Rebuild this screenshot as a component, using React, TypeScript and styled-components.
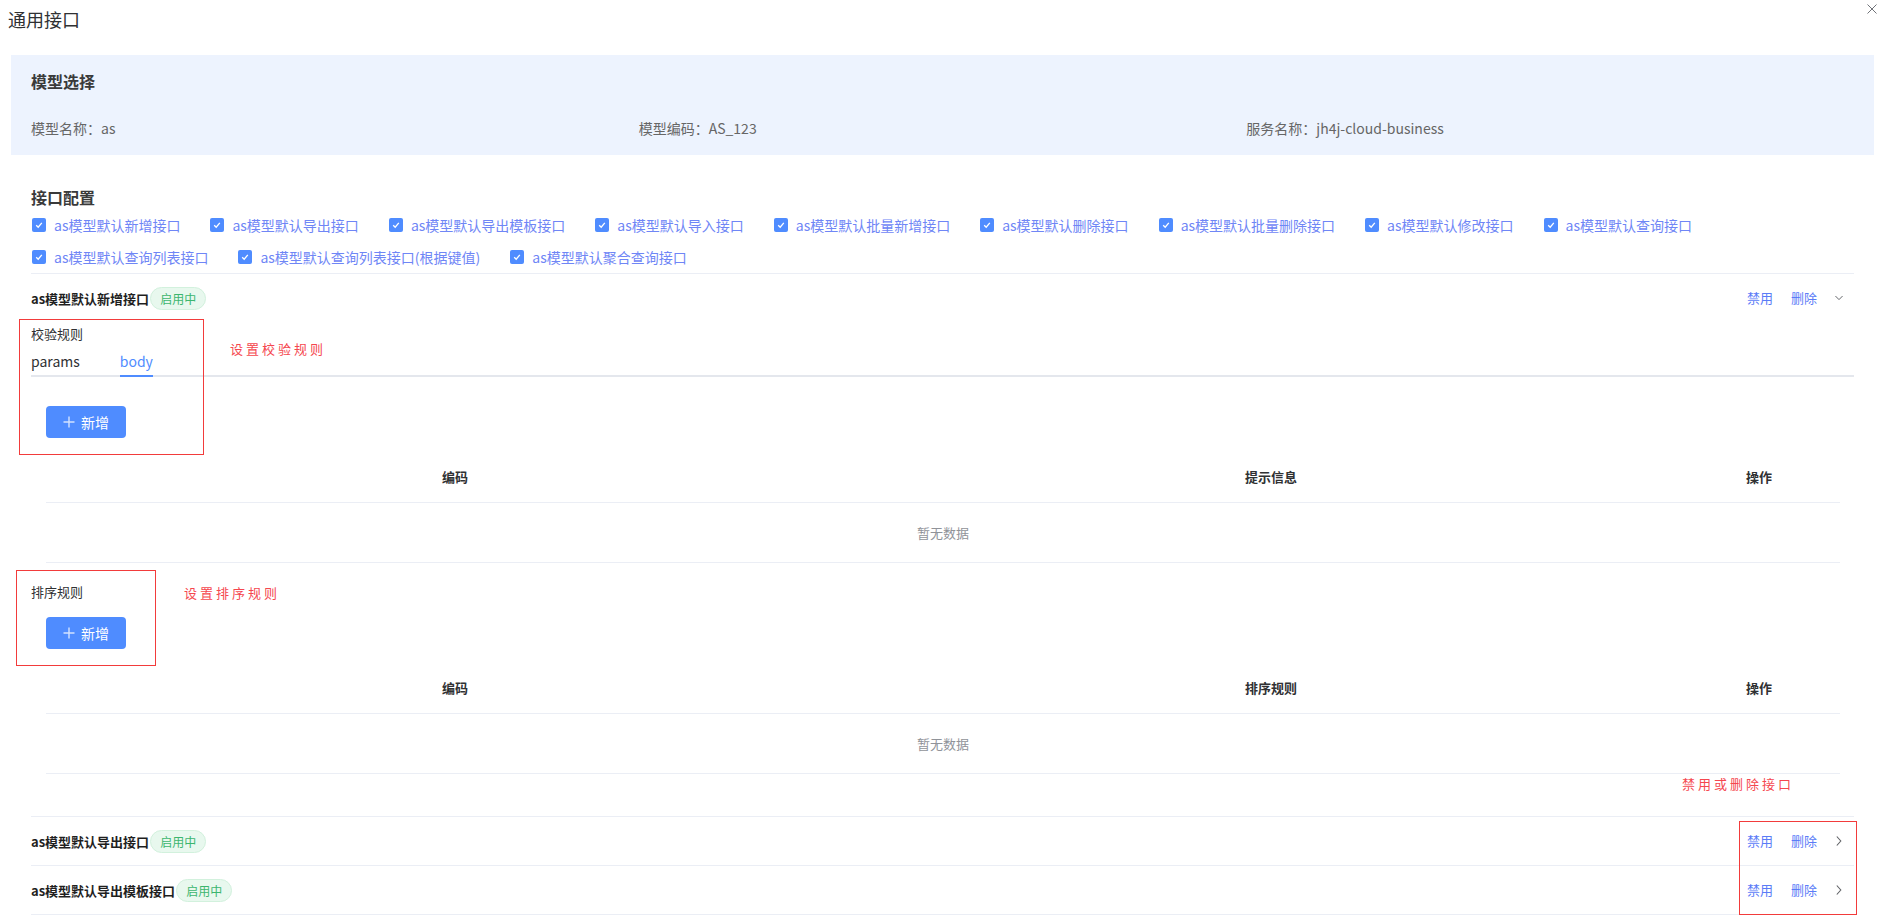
import styled, { createGlobalStyle } from 'styled-components'

const GlobalStyle = createGlobalStyle`
  html, body {
    margin: 0;
    padding: 0;
    background: #fff;
  }
  body {
    font-family: "Noto Sans CJK SC", "Noto Sans", sans-serif;
    color: #303133;
  }
  * {
    box-sizing: border-box;
  }
`

const Dialog = styled.div`
  width: 1881px;
  min-height: 921px;
  background: #fff;
`

const Header = styled.div`
  height: 55px;
  display: flex;
  justify-content: space-between;
  align-items: flex-start;
  padding: 0 4px 0 8px;
`

const Title = styled.div`
  padding-top: 7px;
  font-size: 18px;
  line-height: 24px;
  color: #303133;
`

const CloseButton = styled.button`
  margin-top: 4px;
  width: 10px;
  height: 10px;
  padding: 0;
  border: none;
  background: none;
  cursor: pointer;
  display: flex;
`

const Body = styled.div`
  padding: 0 7px 0 11px;
`

const ModelPanel = styled.div`
  background: #edf3fe;
  padding: 14px 20px 16px;
`

const PanelTitle = styled.div`
  font-size: 16px;
  line-height: 24px;
  font-weight: 600;
  color: #3a3a3a;
`

const InfoGrid = styled.div`
  margin-top: 24px;
  display: grid;
  grid-template-columns: repeat(3, 1fr);
`

const InfoItem = styled.div`
  font-size: 14px;
  line-height: 22px;
  color: #666;
`

const ConfigSection = styled.div`
  margin-top: 30px;
  padding: 0 20px;
`

const SectionTitle = styled.div`
  font-size: 16px;
  line-height: 24px;
  font-weight: 600;
  color: #3a3a3a;
`

const CheckGroup = styled.div`
  display: flex;
  flex-wrap: wrap;
  column-gap: 29px;
`

const CheckItem = styled.label`
  height: 32px;
  display: flex;
  align-items: center;
  cursor: pointer;
`

const CheckBox = styled.span`
  width: 14px;
  height: 14px;
  margin-left: 1px;
  border-radius: 2px;
  background: #4f8cff;
  display: flex;
  align-items: center;
  justify-content: center;
`

const CheckLabel = styled.span`
  padding-left: 8px;
  font-size: 14px;
  line-height: 20px;
  color: #6f86f6;
`

const InterfaceList = styled.div`
  position: relative;
  border-bottom: 1px solid #ebeef5;
`

const InterfaceItem = styled.div`
  border-top: 1px solid #ebeef5;
`

const ItemHeader = styled.div`
  height: 48px;
  display: flex;
  align-items: center;
  justify-content: space-between;
`

const ItemName = styled.div`
  display: flex;
  align-items: center;
  font-size: 13px;
  font-weight: 700;
  color: #1f1f1f;
`

const StatusTag = styled.span`
  margin-left: 1px;
  height: 23px;
  padding: 0 9px;
  border-radius: 12px;
  background: #e8f8ee;
  border: 1px solid #d2f1dd;
  color: #3cb66e;
  font-size: 12px;
  font-weight: 400;
  line-height: 21px;
`

const Actions = styled.div`
  display: flex;
  align-items: center;
  padding-right: 11px;
`

const ActionLink = styled.span`
  font-size: 13px;
  line-height: 20px;
  color: #5b7cf7;
  margin-right: 18px;
  cursor: pointer;
`

const Chevron = styled.span`
  width: 8px;
  height: 10px;
  display: flex;
  align-items: center;
  justify-content: center;
`

const Expanded = styled.div`
  padding-bottom: 42px;
`

const RuleLabel = styled.div<{ $gap?: number }>`
  margin-top: ${(p) => p.$gap ?? 0}px;
  font-size: 13px;
  line-height: 24px;
  color: #303133;
`

const Tabs = styled.div`
  height: 31px;
  display: flex;
  align-items: stretch;
  border-bottom: 2px solid #e4e7ed;
`

const TabItem = styled.div`
  padding: 0 20px;
  margin-bottom: -2px;
  display: flex;
  cursor: pointer;

  &:first-child {
    padding-left: 0;
  }
`

const TabText = styled.span<{ $active?: boolean }>`
  display: flex;
  align-items: center;
  font-size: 14px;
  color: ${(p) => (p.$active ? '#4f8cff' : '#303133')};
  border-bottom: 2px solid ${(p) => (p.$active ? '#4f8cff' : 'transparent')};
`

const RuleBody = styled.div`
  padding: 0 14px 0 15px;
`

const AddButton = styled.button<{ $gap: number }>`
  margin-top: ${(p) => p.$gap}px;
  width: 80px;
  height: 32px;
  border: none;
  border-radius: 4px;
  background: #4f8cff;
  color: #fff;
  font-family: inherit;
  font-size: 14px;
  display: flex;
  align-items: center;
  justify-content: center;
  gap: 6px;
  cursor: pointer;
`

const Table = styled.div`
  margin-top: 13px;
`

const TableRow = styled.div<{ $height: number }>`
  display: grid;
  grid-template-columns: 818px 814px 1fr;
  height: ${(p) => p.$height}px;
  align-items: center;
  border-bottom: 1px solid #ebeef5;
`

const HeaderCell = styled.div`
  text-align: center;
  font-size: 13px;
  font-weight: 700;
  color: #303133;
`

const EmptyCell = styled.div`
  grid-column: 1 / -1;
  text-align: center;
  font-size: 13px;
  color: #909399;
`

const NoteBox = styled.div<{ $l: number; $t: number; $w: number; $h: number }>`
  position: absolute;
  left: ${(p) => p.$l}px;
  top: ${(p) => p.$t}px;
  width: ${(p) => p.$w}px;
  height: ${(p) => p.$h}px;
  border: 1px solid #f23b3b;
  pointer-events: none;
`

const NoteText = styled.div<{ $l: number; $t: number }>`
  position: absolute;
  left: ${(p) => p.$l}px;
  top: ${(p) => p.$t}px;
  font-family: "Liberation Serif", "Noto Sans CJK SC", serif;
  font-size: 13px;
  line-height: 16px;
  letter-spacing: 3px;
  color: #f5474f;
  white-space: nowrap;
`

const interfaces = [
  'as模型默认新增接口',
  'as模型默认导出接口',
  'as模型默认导出模板接口',
  'as模型默认导入接口',
  'as模型默认批量新增接口',
  'as模型默认删除接口',
  'as模型默认批量删除接口',
  'as模型默认修改接口',
  'as模型默认查询接口',
  'as模型默认查询列表接口',
  'as模型默认查询列表接口(根据键值)',
  'as模型默认聚合查询接口',
]

function CheckMark() {
  return (
    <svg width="10" height="10" viewBox="0 0 10 10">
      <polyline points="2.2,5.2 4.2,7.2 7.8,2.8" fill="none" stroke="#fff" strokeWidth="1.3" />
    </svg>
  )
}

function ArrowIcon({ open }: { open?: boolean }) {
  return open ? (
    <svg width="9" height="6" viewBox="0 0 9 6">
      <polyline points="0.5,0.8 4.5,4.8 8.5,0.8" fill="none" stroke="#606266" strokeWidth="1.1" />
    </svg>
  ) : (
    <svg width="6" height="10" viewBox="0 0 6 10">
      <polyline points="0.8,0.5 4.8,5 0.8,9.5" fill="none" stroke="#606266" strokeWidth="1.1" />
    </svg>
  )
}

function PlusIcon() {
  return (
    <svg width="12" height="12" viewBox="0 0 12 12">
      <path d="M6 0.5v11M0.5 6h11" stroke="rgba(255,255,255,0.75)" strokeWidth="1.4" />
    </svg>
  )
}

function RuleTable({ middle }: { middle: string }) {
  return (
    <Table>
      <TableRow $height={52}>
        <HeaderCell>编码</HeaderCell>
        <HeaderCell>{middle}</HeaderCell>
        <HeaderCell>操作</HeaderCell>
      </TableRow>
      <TableRow $height={60}>
        <EmptyCell>暂无数据</EmptyCell>
      </TableRow>
    </Table>
  )
}

function ItemBar({ name, open }: { name: string; open?: boolean }) {
  return (
    <ItemHeader>
      <ItemName>
        {name}
        <StatusTag>启用中</StatusTag>
      </ItemName>
      <Actions>
        <ActionLink>禁用</ActionLink>
        <ActionLink>删除</ActionLink>
        <Chevron>
          <ArrowIcon open={open} />
        </Chevron>
      </Actions>
    </ItemHeader>
  )
}

export default function App() {
  return (
    <Dialog>
      <GlobalStyle />
      <Header>
        <Title>通用接口</Title>
        <CloseButton aria-label="close">
          <svg width="10" height="10" viewBox="0 0 10 10">
            <path d="M0.5 0.5l9 9M9.5 0.5l-9 9" stroke="#707379" strokeWidth="1" />
          </svg>
        </CloseButton>
      </Header>
      <Body>
        <ModelPanel>
          <PanelTitle>模型选择</PanelTitle>
          <InfoGrid>
            <InfoItem>模型名称：as</InfoItem>
            <InfoItem>模型编码：AS_123</InfoItem>
            <InfoItem>服务名称：jh4j-cloud-business</InfoItem>
          </InfoGrid>
        </ModelPanel>

        <ConfigSection>
          <SectionTitle>接口配置</SectionTitle>
          <CheckGroup>
            {interfaces.map((name) => (
              <CheckItem key={name}>
                <CheckBox>
                  <CheckMark />
                </CheckBox>
                <CheckLabel>{name}</CheckLabel>
              </CheckItem>
            ))}
          </CheckGroup>

          <InterfaceList>
            <InterfaceItem>
              <ItemBar name="as模型默认新增接口" open />
              <Expanded>
                <RuleLabel>校验规则</RuleLabel>
                <Tabs>
                  <TabItem>
                    <TabText>params</TabText>
                  </TabItem>
                  <TabItem>
                    <TabText $active>body</TabText>
                  </TabItem>
                </Tabs>
                <RuleBody>
                  <AddButton $gap={29}>
                    <PlusIcon />
                    新增
                  </AddButton>
                  <RuleTable middle="提示信息" />
                </RuleBody>
                <RuleLabel $gap={17}>排序规则</RuleLabel>
                <RuleBody>
                  <AddButton $gap={13}>
                    <PlusIcon />
                    新增
                  </AddButton>
                  <RuleTable middle="排序规则" />
                </RuleBody>
              </Expanded>
            </InterfaceItem>
            <InterfaceItem>
              <ItemBar name="as模型默认导出接口" />
            </InterfaceItem>
            <InterfaceItem>
              <ItemBar name="as模型默认导出模板接口" />
            </InterfaceItem>

            <NoteBox $l={-12} $t={46} $w={185} $h={136} />
            <NoteText $l={199} $t={69}>设置校验规则</NoteText>
            <NoteBox $l={-15} $t={297} $w={140} $h={96} />
            <NoteText $l={153} $t={313}>设置排序规则</NoteText>
            <NoteText $l={1651} $t={504}>禁用或删除接口</NoteText>
            <NoteBox $l={1708} $t={548} $w={118} $h={94} />
          </InterfaceList>
        </ConfigSection>
      </Body>
    </Dialog>
  )
}
